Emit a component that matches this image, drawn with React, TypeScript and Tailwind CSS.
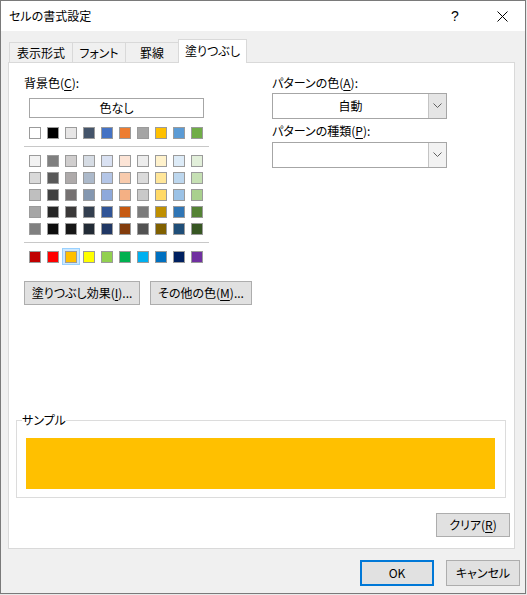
import React from 'react';

const themeTop = ['#FFFFFF', '#000000', '#E7E6E6', '#44546A', '#4472C4', '#ED7D31', '#A5A5A5', '#FFC000', '#5B9BD5', '#70AD47'];

const themeShades = [
  ['#F2F2F2', '#7F7F7F', '#D0CECE', '#D6DCE4', '#D9E1F2', '#FCE4D6', '#EDEDED', '#FFF2CC', '#DDEBF7', '#E2EFDA'],
  ['#D9D9D9', '#595959', '#AEAAAA', '#ACB9CA', '#B4C6E7', '#F8CBAD', '#DBDBDB', '#FFE699', '#BDD7EE', '#C6E0B4'],
  ['#BFBFBF', '#404040', '#757171', '#8497B0', '#8EA9DB', '#F4B084', '#C9C9C9', '#FFD966', '#9BC2E6', '#A9D08E'],
  ['#A6A6A6', '#262626', '#3A3838', '#333F4F', '#305496', '#C65911', '#7B7B7B', '#BF8F00', '#2F75B5', '#548235'],
  ['#808080', '#0D0D0D', '#161616', '#222B35', '#203764', '#833C0C', '#525252', '#806000', '#1F4E78', '#375623'],
];

const standard = ['#C00000', '#FF0000', '#FFC000', '#FFFF00', '#92D050', '#00B050', '#00B0F0', '#0070C0', '#002060', '#7030A0'];

const Swatch: React.FC<{ color: string; selected?: boolean }> = ({ color, selected }) => (
  <div className="relative w-[12px] h-[12px]">
    {selected && (
      <span className="absolute -left-[3px] -top-[3px] w-[18px] h-[17px] bg-[#cce8ff] border border-[#99d1ff]" />
    )}
    <div className="relative w-[12px] h-[12px] border border-[#9b9b9b]" style={{ backgroundColor: color }} />
  </div>
);

const SwatchRow: React.FC<{ colors: string[]; selectedIndex?: number }> = ({ colors, selectedIndex }) => (
  <div className="flex gap-[6px] pl-[5px]">
    {colors.map((c, i) => (
      <Swatch key={i} color={c} selected={i === selectedIndex} />
    ))}
  </div>
);

const Key: React.FC<{ k: string }> = ({ k }) => (
  <span className="underline underline-offset-[2px] decoration-[1px]">{k}</span>
);

const Chevron = () => (
  <svg width="9" height="6" viewBox="0 0 9 6" className="text-[#606060]">
    <polyline points="0.5,0.5 4.5,4.5 8.5,0.5" fill="none" stroke="currentColor" strokeWidth="1" />
  </svg>
);

const Select: React.FC<{ value?: string; dark?: boolean }> = ({ value, dark }) => (
  <div className="flex w-[175px] h-[26px] border border-[#a6a6a6] bg-white">
    <div className="flex-1 flex items-center justify-center">{value}</div>
    <div
      className={`w-[18px] flex items-center justify-center border-l border-[#c4c4c4] ${
        dark ? 'bg-[#e5e5e5]' : 'bg-[#f2f2f2]'
      }`}
    >
      <Chevron />
    </div>
  </div>
);

const Button: React.FC<{ className?: string; children: React.ReactNode }> = ({ className = '', children }) => (
  <div
    className={`flex items-center justify-center h-[24px] bg-[#e1e1e1] border border-[#adadad] ${className}`}
  >
    {children}
  </div>
);

export default function App() {
  return (
    <div className="w-[527px] h-[595px] bg-[#e8e8e8] text-[12px] leading-[16px] text-black font-['Noto_Sans_CJK_JP','Noto_Sans',sans-serif] [font-feature-settings:'palt']">
      <div className="w-[526px] h-[594px] border border-[#7a7a7a] bg-[#f0f0f0] flex flex-col">
        {/* Title bar */}
        <div className="h-[30px] bg-white flex items-center">
          <div className="pl-[8px] flex-1">セルの書式設定</div>
          <div className="w-[46px] h-full flex items-center justify-center text-[14px] font-['Liberation_Sans',sans-serif] mr-[1px]">
            ?
          </div>
          <div className="w-[46px] h-full flex items-center justify-center">
            <svg width="11" height="11" viewBox="0 0 11 11">
              <line x1="0.5" y1="0.5" x2="10.5" y2="10.5" stroke="#000" strokeWidth="1" />
              <line x1="10.5" y1="0.5" x2="0.5" y2="10.5" stroke="#000" strokeWidth="1" />
            </svg>
          </div>
        </div>

        {/* Tabs */}
        <div className="flex items-end h-[23px] mt-[8px] ml-[8px]">
          <div className="w-[63px] h-[20px] border-l border-t border-[#d9d9d9] flex items-center justify-center">
            表示形式
          </div>
          <div className="w-[53px] h-[20px] border-l border-t border-[#d9d9d9] flex items-center justify-center">
            フォント
          </div>
          <div className="w-[53px] h-[20px] border-l border-t border-[#d9d9d9] flex items-center justify-center">
            罫線
          </div>
          <div className="relative z-10 w-[69px] h-[24px] -mb-[1px] bg-white border-l border-t border-r border-[#d9d9d9] flex items-center justify-center pb-[2px]">
            塗りつぶし
          </div>
        </div>

        {/* Panel */}
        <div className="ml-[7px] w-[507px] h-[487px] bg-white border border-[#d9d9d9] flex flex-col">
          <div className="flex pt-[12px] pl-[15px]">
            {/* Left column */}
            <div className="w-[185px] flex flex-col">
              <div>
                背景色(<Key k="C" />):
              </div>
              <div className="mt-[7px] ml-[5px] w-[175px] h-[20px] border border-[#a6a6a6] flex items-center justify-center">
                色なし
              </div>
              <div className="mt-[9px]">
                <SwatchRow colors={themeTop} />
              </div>
              <div className="mt-[7px] h-px bg-[#c8c8c8]" />
              <div className="mt-[8px] flex flex-col gap-[5px]">
                {themeShades.map((row, i) => (
                  <SwatchRow key={i} colors={row} />
                ))}
              </div>
              <div className="mt-[7px] h-px bg-[#c8c8c8]" />
              <div className="mt-[8px]">
                <SwatchRow colors={standard} selectedIndex={2} />
              </div>
            </div>

            {/* Right column */}
            <div className="ml-[63px] flex flex-col">
              <div>
                パターンの色(<Key k="A" />):
              </div>
              <div className="mt-[2px]">
                <Select value="自動" dark />
              </div>
              <div className="mt-[4px]">
                パターンの種類(<Key k="P" />):
              </div>
              <div className="mt-[3px]">
                <Select />
              </div>
            </div>
          </div>

          <div className="flex gap-[10px] mt-[18px] ml-[15px]">
            <Button className="w-[116px]">
              塗りつぶし効果(<Key k="I" />)...
            </Button>
            <Button className="w-[102px]">
              その他の色(<Key k="M" />)...
            </Button>
          </div>

          <fieldset className="mt-[107px] ml-[7px] w-[490px] border border-[#dcdcdc] px-[9px] pb-[8px]">
            <legend className="-ml-[4px] px-0 leading-[16px]">サンプル</legend>
            <div className="mt-[10px] w-[469px] h-[51px] bg-[#ffc000]" />
          </fieldset>

          <div className="mt-[15px] flex justify-end pr-[4px]">
            <Button className="w-[74px]">
              クリア(<Key k="R" />)
            </Button>
          </div>
        </div>

        {/* Footer */}
        <div className="flex justify-end gap-[12px] mt-[11px] pr-[5px]">
          <div className="w-[74px] h-[26px] bg-[#e1e1e1] border-2 border-[#0078d7] flex items-center justify-center">
            OK
          </div>
          <div className="w-[74px] h-[26px] bg-[#e1e1e1] border border-[#adadad] flex items-center justify-center">
            キャンセル
          </div>
        </div>
      </div>
    </div>
  );
}
